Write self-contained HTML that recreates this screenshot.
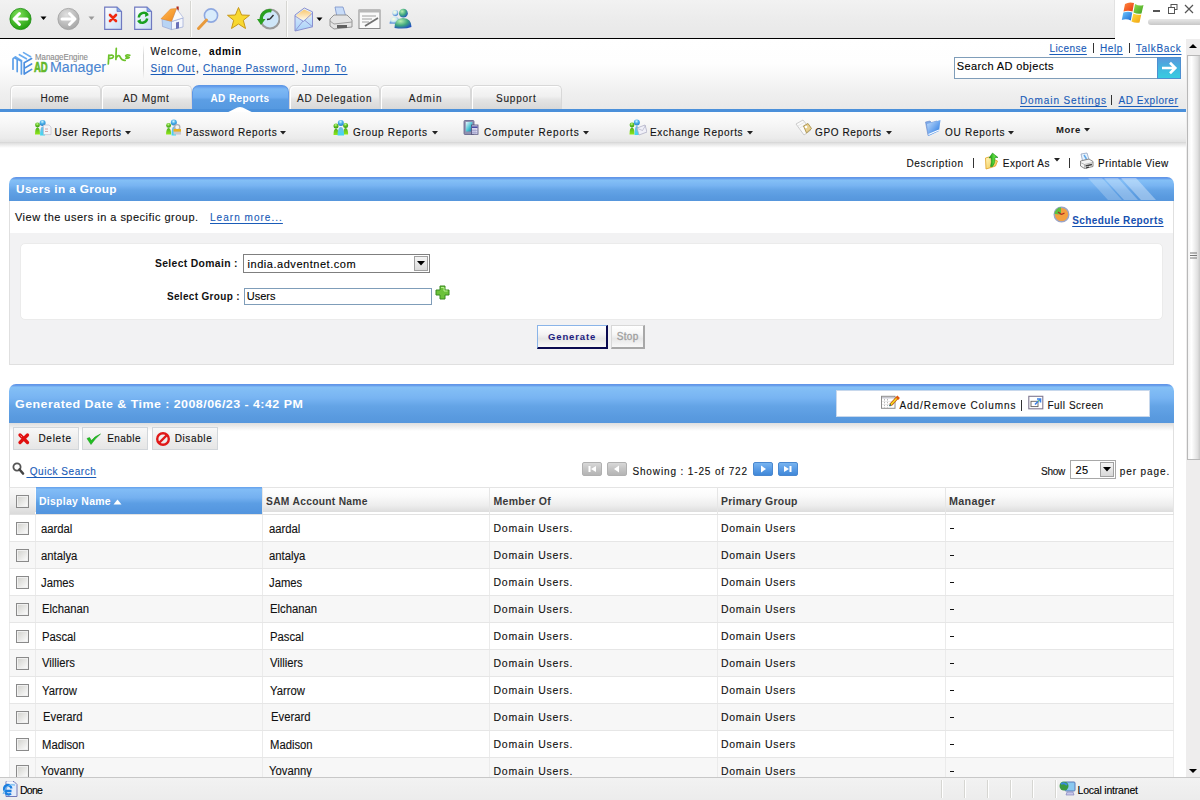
<!DOCTYPE html>
<html><head><meta charset="utf-8">
<style>
*{margin:0;padding:0;box-sizing:border-box}
html,body{width:1200px;height:800px;overflow:hidden;background:#fff;font-family:"Liberation Sans",sans-serif;font-size:12px;color:#222;position:relative}
.a{position:absolute}
.t{position:absolute;white-space:pre;line-height:1;-webkit-text-stroke:0.12px currentColor}
</style></head><body>
<div class=a style="left:0px;top:0px;width:1115px;height:38px;background:linear-gradient(#f2f2f2,#ececec 50%,#e8e8e8)"></div>
<div class=a style="left:0px;top:38px;width:1116px;height:1px;background:#000"></div>
<div class=a style="left:1114px;top:0px;width:1px;height:38px;background:#e2e2e2"></div>
<div class=a style="left:1115px;top:0px;width:85px;height:39px;background:#fff"></div>
<div class=a style="left:190px;top:1px;width:1px;height:36px;background:#d6d6d2"></div>
<div class=a style="left:191px;top:1px;width:1px;height:36px;background:#fbfbfa"></div>
<div class=a style="left:286px;top:1px;width:1px;height:36px;background:#d6d6d2"></div>
<div class=a style="left:287px;top:1px;width:1px;height:36px;background:#fbfbfa"></div>
<svg class=a style="left:9px;top:7px;" width="24" height="24" viewBox="0 0 24 24"><defs><radialGradient id="gb" cx="40%" cy="30%" r="70%"><stop offset="0" stop-color="#7fe05a"/><stop offset="1" stop-color="#23a010"/></radialGradient></defs><circle cx="11.5" cy="12" r="10.6" fill="url(#gb)" stroke="#1a8a10" stroke-width="0.8"/><path d="M5 12 L10.5 6.5 M5 12 L10.5 17.5 M5.5 12 H18" stroke="#fff" stroke-width="3" stroke-linecap="round" fill="none"/></svg>
<svg class=a style="left:40px;top:16px;" width="7" height="5" viewBox="0 0 7 5"><path d="M0.5 0.5 H6.5 L3.5 4 Z" fill="#000"/></svg>
<svg class=a style="left:57px;top:7px;" width="24" height="24" viewBox="0 0 24 24"><defs><radialGradient id="gf" cx="40%" cy="30%" r="70%"><stop offset="0" stop-color="#e0e0e0"/><stop offset="1" stop-color="#a8a8a8"/></radialGradient></defs><circle cx="11.5" cy="12" r="10.6" fill="url(#gf)" stroke="#a0a0a0" stroke-width="0.8"/><path d="M18 12 L12.5 6.5 M18 12 L12.5 17.5 M17.5 12 H5" stroke="#fff" stroke-width="3" stroke-linecap="round" fill="none"/></svg>
<svg class=a style="left:88px;top:16px;" width="7" height="5" viewBox="0 0 7 5"><path d="M0.5 0.5 H6.5 L3.5 4 Z" fill="#999"/></svg>
<svg class=a style="left:104px;top:6px;" width="20" height="25" viewBox="0 0 20 25"><defs><linearGradient id="dg104" x1="0" y1="0" x2="1" y2="1"><stop offset="0" stop-color="#fff"/><stop offset="1" stop-color="#c8dcf4"/></linearGradient></defs><path d="M0.7 1.2 H13 L17.5 5.5 V23.3 H0.7 Z" fill="url(#dg104)" stroke="#6f78c0" stroke-width="1.2"/><path d="M13 1.2 V5.5 H17.5" fill="#7aa8e8" stroke="#6f78c0" stroke-width="0.8"/><path d="M6 9 L12 15 M12 9 L6 15" stroke="#f02a10" stroke-width="2.6" stroke-linecap="round"/></svg>
<svg class=a style="left:134px;top:6px;" width="20" height="25" viewBox="0 0 20 25"><defs><linearGradient id="dg134" x1="0" y1="0" x2="1" y2="1"><stop offset="0" stop-color="#fff"/><stop offset="1" stop-color="#c8dcf4"/></linearGradient></defs><path d="M0.7 1.2 H13 L17.5 5.5 V23.3 H0.7 Z" fill="url(#dg134)" stroke="#6f78c0" stroke-width="1.2"/><path d="M13 1.2 V5.5 H17.5" fill="#7aa8e8" stroke="#6f78c0" stroke-width="0.8"/><path d="M13.5 8.5 A5 5 0 0 0 4.8 11.5" stroke="#1aa020" stroke-width="2.4" fill="none"/><path d="M11.5 6 L15 9 L11 11 Z" fill="#1aa020"/><path d="M4.5 15 A5 5 0 0 0 13.2 12.5" stroke="#1aa020" stroke-width="2.4" fill="none"/><path d="M6.5 18 L3 15 L7 13 Z" fill="#1aa020"/></svg>
<svg class=a style="left:160px;top:5px" width="25" height="27" viewBox="160 5 25 27"><defs><linearGradient id="rf" x1="0" y1="0" x2="1" y2="1"><stop offset="0" stop-color="#ffb850"/><stop offset="1" stop-color="#f08a20"/></linearGradient></defs><rect x="176.5" y="6.5" width="2.2" height="4" fill="#b02818"/><path d="M162 18.5 L171.5 21.5 V29.6 L162.5 26.5 Z" fill="#b8d4f4" stroke="#8a9ad0" stroke-width="0.6"/><path d="M171.5 21.5 L183 18 V27 L171.5 29.6 Z" fill="#f4f6fc" stroke="#8a9ad0" stroke-width="0.6"/><path d="M176.5 8.5 L183.3 17.8 L171.5 21.5 Z" fill="#fafafa" stroke="#9aa8d8" stroke-width="0.6"/><path d="M161 18.8 L170.5 9 L176.5 8.5 L171.5 21.3 Z" fill="url(#rf)" stroke="#e08020" stroke-width="0.5"/><path d="M176 22.5 L179 21.7 V28.2 L176 29 Z" fill="#6a70b8"/></svg>
<svg class=a style="left:196px;top:6px;" width="25" height="26" viewBox="0 0 25 26"><circle cx="15" cy="9.5" r="6.6" fill="#d8ecfc" stroke="#8ea8e0" stroke-width="1.6"/><path d="M10.5 14 L2.5 22.5" stroke="#e89a3c" stroke-width="3" stroke-linecap="round"/></svg>
<svg class=a style="left:226px;top:6px;" width="25" height="25" viewBox="0 0 25 25"><path d="M12.5 1.5 L15.6 9 L23.5 9.3 L17.3 14.3 L19.5 22.5 L12.5 18 L5.5 22.5 L7.7 14.3 L1.5 9.3 L9.4 9 Z" fill="#f8d830" stroke="#c89818" stroke-width="1"/></svg>
<svg class=a style="left:256px;top:7px;" width="24" height="24" viewBox="0 0 24 24"><circle cx="14" cy="12" r="9.5" fill="#cfe6f8" stroke="#9a9a9a" stroke-width="2"/><path d="M14 12 L17.5 8 M14 12 L11 12.5" stroke="#333" stroke-width="1.4"/><path d="M15.5 4 A8 8 0 0 0 5.5 13" stroke="#2aa020" stroke-width="3.2" fill="none"/><path d="M1 12 L9.5 12 L5 18 Z" fill="#2aa020"/></svg>
<svg class=a style="left:293px;top:6px" width="22" height="27" viewBox="293 6 22 27"><defs><linearGradient id="env" x1="0" y1="0" x2="0" y2="1"><stop offset="0" stop-color="#e8f4ff"/><stop offset="1" stop-color="#a8d0f8"/></linearGradient><linearGradient id="ltr" x1="0" y1="0" x2="0" y2="1"><stop offset="0" stop-color="#f8c870"/><stop offset="1" stop-color="#fff8e8"/></linearGradient></defs><path d="M295 15 L304.3 8 L312.5 11.8 V26.8 L295 31 Z" fill="url(#env)" stroke="#8a90d0" stroke-width="1"/><path d="M296.5 15 L304 9.5 L311 12.5 L311 17 L303 20 L296.5 18 Z" fill="url(#ltr)"/><path d="M295 16 L303.5 21.5 L312.5 13 M295 31 L303 21 M312.5 26.8 L305 20.5" stroke="#8a90d0" stroke-width="0.9" fill="none"/></svg>
<svg class=a style="left:316px;top:17px;" width="7" height="5" viewBox="0 0 7 5"><path d="M0.5 0.5 H6.5 L3.5 4 Z" fill="#000"/></svg>
<svg class=a style="left:329px;top:6px;" width="24" height="26" viewBox="0 0 24 26"><path d="M6 1 L14 1 L17 11 L8 11 Z" fill="#c8dcf8" stroke="#7890c8" stroke-width="0.8"/><path d="M1 13 L5 9 L18 9 L23 14 L23 21 L5 23 L1 20 Z" fill="#e4e4e4" stroke="#8a8a8a" stroke-width="0.9"/><path d="M1 15 L5 18 L23 16" stroke="#a0a0a0" fill="none"/><rect x="8" y="19" width="10" height="3" fill="#606060"/></svg>
<svg class=a style="left:358px;top:9px;" width="24" height="21" viewBox="0 0 24 21"><rect x="1" y="1" width="21" height="18.5" fill="#fafafa" stroke="#8a8a8a" stroke-width="1"/><rect x="1" y="1" width="21" height="2.5" fill="#b8b8b8"/><path d="M4 7 H18 M4 10 H14 M4 13 H11" stroke="#888" stroke-width="0.8"/><path d="M7 17 L20 9" stroke="#707070" stroke-width="1.8"/></svg>
<svg class=a style="left:386px;top:6px" width="28" height="26" viewBox="386 6 28 26"><defs><radialGradient id="mg" cx="35%" cy="30%" r="75%"><stop offset="0" stop-color="#b8f0b0"/><stop offset="0.55" stop-color="#40a880"/><stop offset="1" stop-color="#2050c0"/></radialGradient><radialGradient id="ms" cx="40%" cy="35%" r="70%"><stop offset="0" stop-color="#ffffe0"/><stop offset="0.5" stop-color="#c8e8f0"/><stop offset="1" stop-color="#3070d0"/></radialGradient></defs><path d="M389.5 23.5 Q390 16.5 394.5 16.5 Q399 16.5 399.5 22 L397 23.7 Z" fill="url(#ms)"/><circle cx="395.3" cy="13" r="2.9" fill="url(#ms)"/><path d="M394.5 28 Q394.5 18.5 403 18 Q411.5 18.5 411.5 27 Q405 29.5 394.5 28 Z" fill="url(#mg)"/><circle cx="403.4" cy="13.2" r="4.4" fill="url(#mg)"/></svg>
<svg class=a style="left:1120px;top:0px" width="26" height="26" viewBox="1120 0 26 26"><defs><linearGradient id="wr" x1="0" y1="0" x2="1" y2="1"><stop offset="0" stop-color="#ff8a40"/><stop offset="1" stop-color="#e83a10"/></linearGradient><linearGradient id="wgn" x1="0" y1="0" x2="1" y2="1"><stop offset="0" stop-color="#90e050"/><stop offset="1" stop-color="#40a020"/></linearGradient><linearGradient id="wb" x1="0" y1="0" x2="1" y2="1"><stop offset="0" stop-color="#70c8ff"/><stop offset="1" stop-color="#1a68d0"/></linearGradient><linearGradient id="wy" x1="0" y1="0" x2="1" y2="1"><stop offset="0" stop-color="#ffe040"/><stop offset="1" stop-color="#f0a010"/></linearGradient></defs><path d="M1125 4 Q1129 1.5 1134 3 L1132.5 11.5 Q1128 10 1123.5 11.5 Z" fill="url(#wr)"/><path d="M1135 4 Q1139.5 6.5 1143.5 5 L1141.5 13.5 Q1137.5 14.5 1133.5 12.5 Z" fill="url(#wgn)"/><path d="M1123.3 12.5 Q1128 11 1132.3 12.5 L1130.8 20.5 Q1126.5 18.5 1121.8 20 Z" fill="url(#wb)"/><path d="M1133.3 13.5 Q1137.5 15.5 1141.3 14.5 L1139.5 22.5 Q1135.5 23.5 1131.5 21.5 Z" fill="url(#wy)"/></svg>
<div class=a style="left:1153px;top:10px;width:7px;height:2px;background:#555"></div>
<svg class=a style="left:1168px;top:4px;" width="10" height="10" viewBox="0 0 10 10"><rect x="3" y="0.5" width="6" height="5" fill="none" stroke="#555" stroke-width="1"/><rect x="0.5" y="3.5" width="6" height="6" fill="#fff" stroke="#555" stroke-width="1"/></svg>
<svg class=a style="left:1184px;top:4px;" width="10" height="10" viewBox="0 0 10 10"><path d="M1 1 L9 9 M9 1 L1 9" stroke="#555" stroke-width="1.2"/></svg>
<div class=a style="left:1148px;top:19px;width:52px;height:6px;background:linear-gradient(#e8e8e8,#c8c8c8);border-radius:3px 0 0 3px"></div>
<div class=a style="left:0px;top:39px;width:1186px;height:70px;background:linear-gradient(#ffffff 0%,#fefefe 35%,#f0f0f0 75%,#e9e9e9 100%)"></div>
<svg class=a style="left:8px;top:46px" width="32" height="32" viewBox="0 0 800 800"><g fill="none" stroke-width="42" stroke-linecap="round" stroke-linejoin="round"><path d="M390 165 L565 268 M285 218 L460 320 M180 270 L340 365" stroke="#6aacf0"/><path d="M590 315 L405 420 V700 M405 560 L590 450 M405 700 L590 585" stroke="#4a8ee0"/><path d="M125 580 V330 Q125 290 175 300 L230 335 V640 M230 360 Q240 330 280 350 L335 385 V700" stroke="#5b9ee8"/></g></svg>
<svg class=a style="left:104px;top:46px" width="30" height="20" viewBox="104 46 30 20"><g fill="none" stroke="#6cc22a" stroke-width="1.7" stroke-linecap="round" stroke-linejoin="round"><path d="M108.8 55.2 L108.3 64 M108.9 55.6 Q113.6 54.3 113.4 56.8 Q112.9 58.8 109.4 58.4"/><path d="M116.3 48.3 Q116 54 115.9 59.5 M116 58.3 Q118.2 54.2 119.8 56.3 Q121.8 60.6 125.2 60.3"/><path d="M129.8 55.2 Q126.2 54.3 125.7 55.8 Q126.2 57 128.6 57 Q130.6 57.6 125.9 58.4"/></g></svg>
<div class=a style="left:143px;top:45px;width:1px;height:34px;background:linear-gradient(rgba(210,210,210,0),#d6d6d6 30%,#d6d6d6 70%,rgba(210,210,210,0))"></div>
<div class=a style="left:1093px;top:43px;width:1px;height:10px;background:#333"></div>
<div class=a style="left:1129px;top:43px;width:1px;height:10px;background:#333"></div>
<div class=a style="left:954px;top:57px;width:204px;height:22px;background:#fff;border:1px solid #7f9db9"></div>
<div class=a style="left:1157px;top:57px;width:24px;height:22px;background:linear-gradient(#5a98dc,#40b8e0 55%,#38cce0);border:1px solid #4d8fd0"></div>
<svg class=a style="left:1160px;top:60px;" width="18" height="16" viewBox="0 0 18 16"><path d="M2 8 H15 M10 2.8 L15.3 8 L10 13.2" stroke="#fff" stroke-width="2.6" fill="none"/></svg>
<div class=a style="left:10px;top:85px;width:91px;height:24px;background:linear-gradient(#f8f8f8,#f0f0f0 45%,#e4e4e4 60%,#d8d8d8 100%);border:1px solid #d8d8d8;border-bottom:none;border-radius:5px 5px 0 0;box-shadow:inset 1px 1px 0 #fff"></div>
<div class=a style="left:101px;top:85px;width:91px;height:24px;background:linear-gradient(#f8f8f8,#f0f0f0 45%,#e4e4e4 60%,#d8d8d8 100%);border:1px solid #d8d8d8;border-bottom:none;border-radius:5px 5px 0 0;box-shadow:inset 1px 1px 0 #fff"></div>
<div class=a style="left:289px;top:85px;width:91px;height:24px;background:linear-gradient(#f8f8f8,#f0f0f0 45%,#e4e4e4 60%,#d8d8d8 100%);border:1px solid #d8d8d8;border-bottom:none;border-radius:5px 5px 0 0;box-shadow:inset 1px 1px 0 #fff"></div>
<div class=a style="left:380px;top:85px;width:91px;height:24px;background:linear-gradient(#f8f8f8,#f0f0f0 45%,#e4e4e4 60%,#d8d8d8 100%);border:1px solid #d8d8d8;border-bottom:none;border-radius:5px 5px 0 0;box-shadow:inset 1px 1px 0 #fff"></div>
<div class=a style="left:471px;top:85px;width:91px;height:24px;background:linear-gradient(#f8f8f8,#f0f0f0 45%,#e4e4e4 60%,#d8d8d8 100%);border:1px solid #d8d8d8;border-bottom:none;border-radius:5px 5px 0 0;box-shadow:inset 1px 1px 0 #fff"></div>
<div class=a style="left:192px;top:85px;width:97px;height:26px;background:linear-gradient(#5f98ea 0,#6aa4ee 1px,#7db9f4 3px,#6fadf0 45%,#5c9ee4 55%,#5498e0 100%);border:1px solid #5e98e6;border-bottom:none;border-radius:7px 7px 0 0"></div>
<div class=a style="left:0px;top:109px;width:1186px;height:3px;background:#4b90da"></div>
<svg class=a style="left:228px;top:106px;" width="25" height="7" viewBox="0 0 25 7"><path d="M0.3 6 L9.3 1.4 Q12 0.4 14.7 1.4 L23.7 6 V7 H0.3 Z" fill="#fff"/></svg>
<div class=a style="left:1111px;top:95px;width:1px;height:10px;background:#333"></div>
<div class=a style="left:0px;top:112px;width:1186px;height:31px;background:linear-gradient(#fdfdfd,#f6f6f6 40%,#ebebeb 85%,#e0e0e0)"></div>
<div class=a style="left:0px;top:142px;width:1186px;height:6px;background:linear-gradient(#d8d8d8,rgba(255,255,255,0))"></div>
<svg width="0" height="0" style="position:absolute"><defs><radialGradient id="pg" cx="45%" cy="30%" r="70%"><stop offset="0" stop-color="#c8f890"/><stop offset="0.5" stop-color="#5cc020"/><stop offset="1" stop-color="#3a9a10"/></radialGradient><radialGradient id="pb" cx="45%" cy="30%" r="70%"><stop offset="0" stop-color="#d0f4ff"/><stop offset="0.5" stop-color="#48aee8"/><stop offset="1" stop-color="#2a80c8"/></radialGradient><linearGradient id="pbb" x1="0" y1="0" x2="0" y2="1"><stop offset="0" stop-color="#78b8e8"/><stop offset="1" stop-color="#40d8f0"/></linearGradient><linearGradient id="pgb" x1="0" y1="0" x2="0" y2="1"><stop offset="0" stop-color="#50b020"/><stop offset="1" stop-color="#90e818"/></linearGradient></defs></svg>
<svg class=a style="left:33px;top:118px" width="20" height="19" viewBox="33 118 20 19"><path d="M35.00 134.5 Q35.00 127.5 37.5 127.5 Q40.00 127.5 40.00 134.5 Z" fill="url(#pgb)"/><circle cx="37.5" cy="125" r="2.4" fill="url(#pg)"/><path d="M40.10 135.5 Q40.10 126.5 42.6 126.5 Q45.10 126.5 45.10 135.5 Z" fill="url(#pbb)"/><circle cx="42.6" cy="122.9" r="3" fill="url(#pb)"/><path d="M43.5 125 H49 L51 127 V134.6 H43.5 Z" fill="#f4f4f8" stroke="#b8b8c8" stroke-width="0.6"/><path d="M45 129 H48 M45 131.5 H48" stroke="#c89090" stroke-width="0.8"/></svg>
<svg class=a style="left:163px;top:118px" width="21" height="19" viewBox="163 118 21 19"><path d="M166.10 134.5 Q166.10 128 168.6 128 Q171.10 128 171.10 134.5 Z" fill="url(#pgb)"/><circle cx="168.6" cy="125.4" r="2.4" fill="url(#pg)"/><path d="M171.55 135.5 Q171.55 126.5 173.8 126.5 Q176.05 126.5 176.05 135.5 Z" fill="url(#pbb)"/><circle cx="173.8" cy="122.6" r="3" fill="url(#pb)"/><circle cx="177.2" cy="127.2" r="2.6" fill="none" stroke="#b0b0b8" stroke-width="1.4"/><rect x="173.5" y="129" width="7.5" height="5.6" fill="#c8c8d0"/><rect x="173.5" y="129" width="7.5" height="2.6" fill="#e8b020"/></svg>
<svg class=a style="left:125px;top:131px;" width="6" height="4" viewBox="0 0 6 4"><path d="M0 0 H6 L3 3.5 Z" fill="#222"/></svg>
<svg class=a style="left:280px;top:131px;" width="6" height="4" viewBox="0 0 6 4"><path d="M0 0 H6 L3 3.5 Z" fill="#222"/></svg>
<svg class=a style="left:331px;top:119px" width="20" height="18" viewBox="331 119 20 18"><path d="M333.50 135 Q333.50 128.5 336 128.5 Q338.50 128.5 338.50 135 Z" fill="url(#pgb)"/><circle cx="336" cy="126" r="2.5" fill="url(#pg)"/><path d="M343.10 134.5 Q343.10 128 345.6 128 Q348.10 128 348.10 134.5 Z" fill="url(#pgb)"/><circle cx="345.6" cy="125.4" r="2.5" fill="url(#pg)"/><path d="M337.55 135.5 Q337.55 127 340.8 127 Q344.05 127 344.05 135.5 Z" fill="url(#pbb)"/><circle cx="340.8" cy="123" r="3" fill="url(#pb)"/></svg>
<svg class=a style="left:432px;top:131px;" width="6" height="4" viewBox="0 0 6 4"><path d="M0 0 H6 L3 3.5 Z" fill="#222"/></svg>
<svg class=a style="left:462px;top:118px" width="18" height="18" viewBox="462 118 18 18"><defs><linearGradient id="scr" x1="0" y1="0" x2="1" y2="1"><stop offset="0" stop-color="#e8f8ff"/><stop offset="0.6" stop-color="#40c0d0"/><stop offset="1" stop-color="#3060a0"/></linearGradient></defs><rect x="464" y="120.5" width="10" height="14" rx="1" fill="#9090b0" stroke="#606088" stroke-width="0.8"/><rect x="465.8" y="122" width="6.5" height="9.5" fill="url(#scr)"/><rect x="471.5" y="125" width="6.5" height="9.3" fill="#d8d8f0" stroke="#505078" stroke-width="0.8"/><rect x="472" y="126.5" width="5.5" height="1.3" fill="#2a2a90"/><path d="M473 129 V134 M475 129 V134 M472 130.5 H477.5 M472 132.5 H477.5" stroke="#9090c0" stroke-width="0.5"/></svg>
<svg class=a style="left:583px;top:131px;" width="6" height="4" viewBox="0 0 6 4"><path d="M0 0 H6 L3 3.5 Z" fill="#222"/></svg>
<svg class=a style="left:627px;top:117px" width="20" height="19" viewBox="627 117 20 19"><path d="M629.50 134.5 Q629.50 127.5 632 127.5 Q634.50 127.5 634.50 134.5 Z" fill="url(#pgb)"/><circle cx="632" cy="125" r="2.4" fill="url(#pg)"/><path d="M634.55 135 Q634.55 126 636.8 126 Q639.05 126 639.05 135 Z" fill="url(#pbb)"/><circle cx="636.8" cy="122.5" r="3" fill="url(#pb)"/><path d="M637 128 L645 125 L647 132 L639 135 Z" fill="#f0f0f8" stroke="#a8a8c0" stroke-width="0.7"/><path d="M637.5 128.5 L642.5 130.5 L645.5 125.5" stroke="#a8a8c0" stroke-width="0.6" fill="none"/></svg>
<svg class=a style="left:747px;top:131px;" width="6" height="4" viewBox="0 0 6 4"><path d="M0 0 H6 L3 3.5 Z" fill="#222"/></svg>
<svg class=a style="left:793px;top:118px" width="20" height="19" viewBox="793 118 20 19"><path d="M796 124 L803 120 L811 130 L804 135 Z" fill="#fafafa" stroke="#c0c0c0" stroke-width="0.8"/><path d="M798 126 L804 122.5 M799.5 128 L805.5 124.5" stroke="#d8d8d8" stroke-width="0.6"/><path d="M803.5 126 L808 123.5 L811.5 128.5 L806.5 133 Z" fill="#e8d090" stroke="#a08840" stroke-width="0.8"/><circle cx="806" cy="127" r="1.3" fill="#fff"/></svg>
<svg class=a style="left:886px;top:131px;" width="6" height="4" viewBox="0 0 6 4"><path d="M0 0 H6 L3 3.5 Z" fill="#222"/></svg>
<svg class=a style="left:923px;top:118px" width="20" height="19" viewBox="923 118 20 19"><defs><linearGradient id="fld" x1="0" y1="0" x2="1" y2="1"><stop offset="0" stop-color="#c8e0fc"/><stop offset="1" stop-color="#1a70e0"/></linearGradient></defs><path d="M925.5 122 L930 121 L931.5 122.5 L937 121 L938 130 L928 135.5 Z" fill="#7aa8e8" stroke="#6a88c8" stroke-width="0.6"/><path d="M927 124 L940.5 120 L939 131 L928.5 136 Z" fill="url(#fld)"/><path d="M928.5 134.5 L939 130" stroke="#fff" stroke-width="1.2"/></svg>
<svg class=a style="left:1008px;top:131px;" width="6" height="4" viewBox="0 0 6 4"><path d="M0 0 H6 L3 3.5 Z" fill="#222"/></svg>
<svg class=a style="left:1084px;top:128px;" width="6" height="4" viewBox="0 0 6 4"><path d="M0 0 H6 L3 3.5 Z" fill="#222"/></svg>
<div class=a style="left:973px;top:158px;width:1px;height:10px;background:#333"></div>
<svg class=a style="left:983px;top:151px" width="17" height="20" viewBox="983 151 17 20"><defs><linearGradient id="fy" x1="0" y1="0" x2="1" y2="1"><stop offset="0" stop-color="#fff8c0"/><stop offset="1" stop-color="#f0c040"/></linearGradient><linearGradient id="ag" x1="0" y1="0" x2="1" y2="0"><stop offset="0" stop-color="#109010"/><stop offset="0.6" stop-color="#60e040"/><stop offset="1" stop-color="#109010"/></linearGradient></defs><path d="M985.5 158 L989 157 L997.5 161 L995.5 166 L991 167.5 L986 169 Z" fill="url(#fy)" stroke="#e0a020" stroke-width="0.8"/><path d="M990.5 166.5 Q992 162 991 157.5 L989 158 L992.5 153 L998 157.5 L995 157.5 Q995.5 163 992.5 166.5 Z" fill="url(#ag)" stroke="#108010" stroke-width="0.5"/></svg>
<svg class=a style="left:1054px;top:158px;" width="6" height="4" viewBox="0 0 6 4"><path d="M0 0 H6 L3 3.5 Z" fill="#222"/></svg>
<div class=a style="left:1069px;top:158px;width:1px;height:10px;background:#333"></div>
<svg class=a style="left:1078px;top:151px" width="18" height="20" viewBox="1078 151 18 20"><path d="M1081 154 L1087 153 L1089 159.5 L1082.5 160.5 Z" fill="#e8f4ff" stroke="#8898b8" stroke-width="0.7"/><path d="M1084 155 L1086.5 159" stroke="#60a8e8" stroke-width="1.5"/><path d="M1080.5 161 L1089 159 L1093 161.5 V166.5 L1084.5 168.5 L1080.5 166 Z" fill="#f4f4f4" stroke="#707070" stroke-width="0.8"/><path d="M1080.5 162.5 L1084.5 164.5 L1093 162.5 M1084.5 164.5 V168.5" stroke="#909090" stroke-width="0.6" fill="none"/><path d="M1085.5 166 L1092 164.5" stroke="#404040" stroke-width="1.3"/><path d="M1086 168 L1089 167" stroke="#303030" stroke-width="1.2"/></svg>
<div class=a style="left:9px;top:177px;width:1165px;height:24px;background:linear-gradient(#6196e8 0,#6196e8 1px,#6ea6ee 2px,#84c0f6 3px,#78b4f2 35%,#64a4e6 55%,#5a9be0 80%,#5696dc 100%);border-radius:7px 7px 0 0"></div>
<svg class=a style="left:1088px;top:178px;" width="70" height="22" viewBox="0 0 70 22"><path d="M0 0 H14 L34 22 H20 Z" fill="rgba(255,255,255,0.22)"/><path d="M16 0 H30 L50 22 H36 Z" fill="rgba(255,255,255,0.28)"/><path d="M33 0 H48 L68 22 H53 Z" fill="rgba(255,255,255,0.35)"/></svg>
<div class=a style="left:9px;top:201px;width:1165px;height:164px;background:#fff;border:1px solid #e0e0e0;border-top:none"></div>
<svg class=a style="left:1053px;top:206px;" width="17" height="17" viewBox="0 0 17 17"><circle cx="8.5" cy="8.5" r="7.3" fill="#f4a040" stroke="#9aa4c8" stroke-width="1.4"/><path d="M1.5 8 A7 7 0 0 1 8 1.3 L8 8.5 Z" fill="#5cc040"/><path d="M8.5 8.5 L5 6 M8.5 8.5 L11.5 7" stroke="#b02a20" stroke-width="1.2"/></svg>
<div class=a style="left:10px;top:233px;width:1163px;height:131px;background:#f2f2f3"></div>
<div class=a style="left:20px;top:243px;width:1143px;height:77px;background:#fff;border:1px solid #ebebeb;border-radius:5px"></div>
<div class=a style="left:243px;top:254px;width:187px;height:19px;background:#fff;border:1px solid #7f7f7f"></div>
<div class=a style="left:414px;top:256px;width:14px;height:15px;background:linear-gradient(#f4f4f4,#dcdcdc);border:1px solid #a0a0a0"></div>
<svg class=a style="left:417px;top:261px;" width="8" height="5" viewBox="0 0 8 5"><path d="M0 0 H8 L4 4.5 Z" fill="#000"/></svg>
<div class=a style="left:244px;top:288px;width:188px;height:17px;background:#fff;border:1px solid #7f9db9"></div>
<svg class=a style="left:435px;top:285px;" width="15" height="15" viewBox="0 0 15 15"><path d="M5 1 H10 V5 H14 V10 H10 V14 H5 V10 H1 V5 H5 Z" fill="#6cc23a" stroke="#3a8a20" stroke-width="1"/><path d="M6 2.5 H9 V6 H12.5" stroke="#b8f090" stroke-width="1" fill="none"/></svg>
<div class=a style="left:537px;top:325px;width:71px;height:24px;background:linear-gradient(#ffffff,#f4f4f4 40%,#e6e6e6 60%,#f8f8f8);border-style:solid;border-color:#8ab4e8 #0a0a50 #0a0a50 #8ab4e8;border-width:1px 2px 2px 1px"></div>
<div class=a style="left:611px;top:325px;width:34px;height:24px;background:linear-gradient(#ffffff,#f6f6f6 40%,#e8e8e8 60%,#f8f8f8);border-style:solid;border-color:#d8d8d8 #a8a8a8 #a8a8a8 #d8d8d8;border-width:1px 2px 2px 1px"></div>
<div class=a style="left:9px;top:384px;width:1165px;height:40px;background:linear-gradient(#6196e8 0,#6196e8 1px,#6ea6ee 2px,#84c0f6 3px,#78b4f2 35%,#64a4e6 55%,#5a9be0 80%,#5696dc 100%);border-radius:7px 7px 0 0"></div>
<div class=a style="left:836px;top:390px;width:314px;height:27px;background:#fff;border:1px solid #c8d8ec"></div>
<svg class=a style="left:880px;top:394px" width="20" height="16" viewBox="880 394 20 16"><rect x="881.5" y="396.3" width="13.5" height="12" fill="#fff" stroke="#8c8c8c" stroke-width="1"/><rect x="882" y="397" width="12.5" height="1.5" fill="#c8c8d0"/><path d="M884.5 399 V408 M887.5 399 V408" stroke="#b0b0b0" stroke-width="0.9" stroke-dasharray="1.5 1.3"/><path d="M882 401.5 H894.5 M882 404.5 H894.5" stroke="#e4e4e4" stroke-width="0.8"/><path d="M890.5 405 L897.5 397.5" stroke="#c05010" stroke-width="3.2"/><path d="M890.5 405 L897.5 397.5" stroke="#f8e020" stroke-width="1.6"/><path d="M896.5 396.5 L899 399" stroke="#e05a10" stroke-width="2.5"/><path d="M889.5 406 L890.8 404.6" stroke="#206060" stroke-width="1.4"/></svg>
<div class=a style="left:1021px;top:400px;width:1px;height:11px;background:#333"></div>
<svg class=a style="left:1027px;top:394px" width="18" height="17" viewBox="1027 394 18 17"><rect x="1028.8" y="396.3" width="14" height="12.5" fill="#fff" stroke="#807890" stroke-width="1.1"/><rect x="1031" y="401.3" width="7" height="5.3" fill="none" stroke="#606060" stroke-width="0.9"/><path d="M1035 404.5 L1040 399.5" stroke="#3a80e8" stroke-width="1.6"/><path d="M1037 399 H1040.5 V402.5" stroke="#3a80e8" stroke-width="1.6" fill="none"/><circle cx="1038.5" cy="401" r="0.7" fill="#80e060"/></svg>
<div class=a style="left:9px;top:423px;width:1165px;height:360px;background:#fff;border:1px solid #e0e0e0;border-top:none"></div>
<div class=a style="left:10px;top:423px;width:1163px;height:8px;background:linear-gradient(#dedede,rgba(255,255,255,0))"></div>
<div class=a style="left:13px;top:427px;width:66px;height:23px;background:linear-gradient(#f8f8f8,#eeeeee 50%,#e6e6e6);border:1px solid #d2d6da"></div>
<div class=a style="left:82px;top:427px;width:66px;height:23px;background:linear-gradient(#f8f8f8,#eeeeee 50%,#e6e6e6);border:1px solid #d2d6da"></div>
<div class=a style="left:152px;top:427px;width:66px;height:23px;background:linear-gradient(#f8f8f8,#eeeeee 50%,#e6e6e6);border:1px solid #d2d6da"></div>
<svg class=a style="left:17px;top:432px" width="14" height="14" viewBox="17 432 14 14"><path d="M20 435 L27.5 442.5 M27.5 435 L20 442.5" stroke="#e01010" stroke-width="3.3" stroke-linecap="round"/><path d="M20.5 435.5 L22 437" stroke="#ff8080" stroke-width="1"/></svg>
<svg class=a style="left:86px;top:433px" width="16" height="13" viewBox="86 433 16 13"><path d="M87 438.5 L89.5 437.5 L91.5 440.5 Q95 436 100.5 434 Q95.5 438 91 444.5 Z" fill="#20c020" stroke="#109010" stroke-width="0.5"/></svg>
<svg class=a style="left:156px;top:432px;" width="14" height="14" viewBox="0 0 14 14"><circle cx="7" cy="7" r="5.8" fill="none" stroke="#e01818" stroke-width="2.4"/><path d="M3 11 L11 3" stroke="#e01818" stroke-width="2.4"/></svg>
<svg class=a style="left:12px;top:462px;" width="13" height="14" viewBox="0 0 13 14"><circle cx="5" cy="5" r="3.6" fill="#fff" stroke="#555" stroke-width="1.8"/><path d="M7.5 7.5 L11 11.5" stroke="#444" stroke-width="2.6" stroke-linecap="round"/></svg>
<div class=a style="left:581.6px;top:462px;width:20px;height:14px;background:linear-gradient(#d8d8d8,#c4c4c4 50%,#b4b4b4);border:1px solid #b0b0b0;border-radius:2px"></div>
<svg class=a style="left:581.6px;top:462px;" width="20" height="14" viewBox="0 0 20 14"><rect x="6.5" y="4" width="2" height="6" fill="#fff"/><path d="M14 4 V10 L9 7 Z" fill="#fff"/></svg>
<div class=a style="left:607px;top:462px;width:20px;height:14px;background:linear-gradient(#d8d8d8,#c4c4c4 50%,#b4b4b4);border:1px solid #b0b0b0;border-radius:2px"></div>
<svg class=a style="left:607px;top:462px;" width="20" height="14" viewBox="0 0 20 14"><path d="M12 3.5 V10.5 L7 7 Z" fill="#fff"/></svg>
<div class=a style="left:753px;top:462px;width:20px;height:14px;background:linear-gradient(#78b4f0,#5a9ce6 50%,#4088d8);border:1px solid #4a88d0;border-radius:2px"></div>
<svg class=a style="left:753px;top:462px;" width="20" height="14" viewBox="0 0 20 14"><path d="M8 3.5 V10.5 L13 7 Z" fill="#fff"/></svg>
<div class=a style="left:778.4px;top:462px;width:20px;height:14px;background:linear-gradient(#78b4f0,#5a9ce6 50%,#4088d8);border:1px solid #4a88d0;border-radius:2px"></div>
<svg class=a style="left:778.4px;top:462px;" width="20" height="14" viewBox="0 0 20 14"><path d="M6 4 V10 L11 7 Z" fill="#fff"/><rect x="11.5" y="4" width="2" height="6" fill="#fff"/></svg>
<div class=a style="left:1070px;top:460px;width:46px;height:19px;background:#fff;border:1px solid #a8a8a8"></div>
<div class=a style="left:1100px;top:462px;width:14px;height:15px;background:linear-gradient(#f4f4f4,#d8d8d8);border:1px solid #a0a0a0"></div>
<svg class=a style="left:1103px;top:467px;" width="8" height="5" viewBox="0 0 8 5"><path d="M0 0 H8 L4 4.5 Z" fill="#000"/></svg>
<div class=a style="left:9px;top:487px;width:1165px;height:1px;background:#e4e4e4"></div>
<div class=a style="left:9px;top:488px;width:1165px;height:24px;background:linear-gradient(#ffffff,#fafafa 35%,#ececec 75%,#dddddd)"></div>
<div class=a style="left:9px;top:512px;width:1165px;height:2px;background:#fff"></div>
<div class=a style="left:9px;top:488px;width:26px;height:26px;background:linear-gradient(#fafafa,#ececec 60%,#dadada)"></div>
<div class=a style="left:36px;top:487px;width:226px;height:27px;background:linear-gradient(#6aa6ee 0,#6aa6ee 1px,#82bdf6 2px,#74b0f0 40%,#5c9ee4 60%,#5294de)"></div>
<div class=a style="left:262px;top:487px;width:1px;height:27px;background:#e6e6e6"></div>
<div class=a style="left:489px;top:487px;width:1px;height:27px;background:#e6e6e6"></div>
<div class=a style="left:717px;top:487px;width:1px;height:27px;background:#e6e6e6"></div>
<div class=a style="left:945px;top:487px;width:1px;height:27px;background:#e6e6e6"></div>
<div class=a style="left:1173px;top:487px;width:1px;height:27px;background:#e6e6e6"></div>
<div class=a style="left:9px;top:487px;width:1px;height:27px;background:#e6e6e6"></div>
<div class=a style="left:9px;top:514px;width:1165px;height:1px;background:#e2e2e2"></div>
<svg class=a style="left:16px;top:495px;" width="14" height="14" viewBox="0 0 14 14"><rect x="0.5" y="0.5" width="12" height="12" fill="#f0f0f0" stroke="#8a8a8a" stroke-width="1"/><rect x="2" y="2" width="9" height="9" fill="url(#cbg)"/></svg>
<svg class=a style="left:113px;top:499px;" width="9" height="6" viewBox="0 0 9 6"><path d="M0.5 5.5 H8.5 L4.5 0.5 Z" fill="#fff"/></svg>
<div class=a style="left:9px;top:515px;width:1165px;height:26px;background:#ffffff"></div>
<div class=a style="left:9px;top:541px;width:1165px;height:1px;background:#e6e6e6"></div>
<div class=a style="left:9px;top:515px;width:1px;height:26px;background:#ebebeb"></div>
<div class=a style="left:35px;top:515px;width:1px;height:26px;background:#ebebeb"></div>
<div class=a style="left:262px;top:515px;width:1px;height:26px;background:#ebebeb"></div>
<div class=a style="left:489px;top:515px;width:1px;height:26px;background:#ebebeb"></div>
<div class=a style="left:717px;top:515px;width:1px;height:26px;background:#ebebeb"></div>
<div class=a style="left:945px;top:515px;width:1px;height:26px;background:#ebebeb"></div>
<div class=a style="left:1173px;top:515px;width:1px;height:26px;background:#ebebeb"></div>
<svg class=a style="left:16px;top:522px;" width="14" height="14" viewBox="0 0 14 14"><rect x="0.5" y="0.5" width="12" height="12" fill="#f0f0f0" stroke="#8a8a8a" stroke-width="1"/><rect x="2" y="2" width="9" height="9" fill="url(#cbg)"/></svg>
<div class=a style="left:950px;top:528px;width:4px;height:1px;background:#111"></div>
<div class=a style="left:9px;top:542px;width:1165px;height:26px;background:#f7f7f7"></div>
<div class=a style="left:9px;top:568px;width:1165px;height:1px;background:#e6e6e6"></div>
<div class=a style="left:9px;top:542px;width:1px;height:26px;background:#ebebeb"></div>
<div class=a style="left:35px;top:542px;width:1px;height:26px;background:#ebebeb"></div>
<div class=a style="left:262px;top:542px;width:1px;height:26px;background:#ebebeb"></div>
<div class=a style="left:489px;top:542px;width:1px;height:26px;background:#ebebeb"></div>
<div class=a style="left:717px;top:542px;width:1px;height:26px;background:#ebebeb"></div>
<div class=a style="left:945px;top:542px;width:1px;height:26px;background:#ebebeb"></div>
<div class=a style="left:1173px;top:542px;width:1px;height:26px;background:#ebebeb"></div>
<svg class=a style="left:16px;top:549px;" width="14" height="14" viewBox="0 0 14 14"><rect x="0.5" y="0.5" width="12" height="12" fill="#f0f0f0" stroke="#8a8a8a" stroke-width="1"/><rect x="2" y="2" width="9" height="9" fill="url(#cbg)"/></svg>
<div class=a style="left:950px;top:555px;width:4px;height:1px;background:#111"></div>
<div class=a style="left:9px;top:569px;width:1165px;height:26px;background:#ffffff"></div>
<div class=a style="left:9px;top:595px;width:1165px;height:1px;background:#e6e6e6"></div>
<div class=a style="left:9px;top:569px;width:1px;height:26px;background:#ebebeb"></div>
<div class=a style="left:35px;top:569px;width:1px;height:26px;background:#ebebeb"></div>
<div class=a style="left:262px;top:569px;width:1px;height:26px;background:#ebebeb"></div>
<div class=a style="left:489px;top:569px;width:1px;height:26px;background:#ebebeb"></div>
<div class=a style="left:717px;top:569px;width:1px;height:26px;background:#ebebeb"></div>
<div class=a style="left:945px;top:569px;width:1px;height:26px;background:#ebebeb"></div>
<div class=a style="left:1173px;top:569px;width:1px;height:26px;background:#ebebeb"></div>
<svg class=a style="left:16px;top:576px;" width="14" height="14" viewBox="0 0 14 14"><rect x="0.5" y="0.5" width="12" height="12" fill="#f0f0f0" stroke="#8a8a8a" stroke-width="1"/><rect x="2" y="2" width="9" height="9" fill="url(#cbg)"/></svg>
<div class=a style="left:950px;top:582px;width:4px;height:1px;background:#111"></div>
<div class=a style="left:9px;top:596px;width:1165px;height:26px;background:#f7f7f7"></div>
<div class=a style="left:9px;top:622px;width:1165px;height:1px;background:#e6e6e6"></div>
<div class=a style="left:9px;top:596px;width:1px;height:26px;background:#ebebeb"></div>
<div class=a style="left:35px;top:596px;width:1px;height:26px;background:#ebebeb"></div>
<div class=a style="left:262px;top:596px;width:1px;height:26px;background:#ebebeb"></div>
<div class=a style="left:489px;top:596px;width:1px;height:26px;background:#ebebeb"></div>
<div class=a style="left:717px;top:596px;width:1px;height:26px;background:#ebebeb"></div>
<div class=a style="left:945px;top:596px;width:1px;height:26px;background:#ebebeb"></div>
<div class=a style="left:1173px;top:596px;width:1px;height:26px;background:#ebebeb"></div>
<svg class=a style="left:16px;top:603px;" width="14" height="14" viewBox="0 0 14 14"><rect x="0.5" y="0.5" width="12" height="12" fill="#f0f0f0" stroke="#8a8a8a" stroke-width="1"/><rect x="2" y="2" width="9" height="9" fill="url(#cbg)"/></svg>
<div class=a style="left:950px;top:609px;width:4px;height:1px;background:#111"></div>
<div class=a style="left:9px;top:623px;width:1165px;height:26px;background:#ffffff"></div>
<div class=a style="left:9px;top:649px;width:1165px;height:1px;background:#e6e6e6"></div>
<div class=a style="left:9px;top:623px;width:1px;height:26px;background:#ebebeb"></div>
<div class=a style="left:35px;top:623px;width:1px;height:26px;background:#ebebeb"></div>
<div class=a style="left:262px;top:623px;width:1px;height:26px;background:#ebebeb"></div>
<div class=a style="left:489px;top:623px;width:1px;height:26px;background:#ebebeb"></div>
<div class=a style="left:717px;top:623px;width:1px;height:26px;background:#ebebeb"></div>
<div class=a style="left:945px;top:623px;width:1px;height:26px;background:#ebebeb"></div>
<div class=a style="left:1173px;top:623px;width:1px;height:26px;background:#ebebeb"></div>
<svg class=a style="left:16px;top:630px;" width="14" height="14" viewBox="0 0 14 14"><rect x="0.5" y="0.5" width="12" height="12" fill="#f0f0f0" stroke="#8a8a8a" stroke-width="1"/><rect x="2" y="2" width="9" height="9" fill="url(#cbg)"/></svg>
<div class=a style="left:950px;top:636px;width:4px;height:1px;background:#111"></div>
<div class=a style="left:9px;top:650px;width:1165px;height:26px;background:#f7f7f7"></div>
<div class=a style="left:9px;top:676px;width:1165px;height:1px;background:#e6e6e6"></div>
<div class=a style="left:9px;top:650px;width:1px;height:26px;background:#ebebeb"></div>
<div class=a style="left:35px;top:650px;width:1px;height:26px;background:#ebebeb"></div>
<div class=a style="left:262px;top:650px;width:1px;height:26px;background:#ebebeb"></div>
<div class=a style="left:489px;top:650px;width:1px;height:26px;background:#ebebeb"></div>
<div class=a style="left:717px;top:650px;width:1px;height:26px;background:#ebebeb"></div>
<div class=a style="left:945px;top:650px;width:1px;height:26px;background:#ebebeb"></div>
<div class=a style="left:1173px;top:650px;width:1px;height:26px;background:#ebebeb"></div>
<svg class=a style="left:16px;top:657px;" width="14" height="14" viewBox="0 0 14 14"><rect x="0.5" y="0.5" width="12" height="12" fill="#f0f0f0" stroke="#8a8a8a" stroke-width="1"/><rect x="2" y="2" width="9" height="9" fill="url(#cbg)"/></svg>
<div class=a style="left:950px;top:663px;width:4px;height:1px;background:#111"></div>
<div class=a style="left:9px;top:677px;width:1165px;height:26px;background:#ffffff"></div>
<div class=a style="left:9px;top:703px;width:1165px;height:1px;background:#e6e6e6"></div>
<div class=a style="left:9px;top:677px;width:1px;height:26px;background:#ebebeb"></div>
<div class=a style="left:35px;top:677px;width:1px;height:26px;background:#ebebeb"></div>
<div class=a style="left:262px;top:677px;width:1px;height:26px;background:#ebebeb"></div>
<div class=a style="left:489px;top:677px;width:1px;height:26px;background:#ebebeb"></div>
<div class=a style="left:717px;top:677px;width:1px;height:26px;background:#ebebeb"></div>
<div class=a style="left:945px;top:677px;width:1px;height:26px;background:#ebebeb"></div>
<div class=a style="left:1173px;top:677px;width:1px;height:26px;background:#ebebeb"></div>
<svg class=a style="left:16px;top:684px;" width="14" height="14" viewBox="0 0 14 14"><rect x="0.5" y="0.5" width="12" height="12" fill="#f0f0f0" stroke="#8a8a8a" stroke-width="1"/><rect x="2" y="2" width="9" height="9" fill="url(#cbg)"/></svg>
<div class=a style="left:950px;top:690px;width:4px;height:1px;background:#111"></div>
<div class=a style="left:9px;top:704px;width:1165px;height:26px;background:#f7f7f7"></div>
<div class=a style="left:9px;top:730px;width:1165px;height:1px;background:#e6e6e6"></div>
<div class=a style="left:9px;top:704px;width:1px;height:26px;background:#ebebeb"></div>
<div class=a style="left:35px;top:704px;width:1px;height:26px;background:#ebebeb"></div>
<div class=a style="left:262px;top:704px;width:1px;height:26px;background:#ebebeb"></div>
<div class=a style="left:489px;top:704px;width:1px;height:26px;background:#ebebeb"></div>
<div class=a style="left:717px;top:704px;width:1px;height:26px;background:#ebebeb"></div>
<div class=a style="left:945px;top:704px;width:1px;height:26px;background:#ebebeb"></div>
<div class=a style="left:1173px;top:704px;width:1px;height:26px;background:#ebebeb"></div>
<svg class=a style="left:16px;top:711px;" width="14" height="14" viewBox="0 0 14 14"><rect x="0.5" y="0.5" width="12" height="12" fill="#f0f0f0" stroke="#8a8a8a" stroke-width="1"/><rect x="2" y="2" width="9" height="9" fill="url(#cbg)"/></svg>
<div class=a style="left:950px;top:717px;width:4px;height:1px;background:#111"></div>
<div class=a style="left:9px;top:731px;width:1165px;height:26px;background:#ffffff"></div>
<div class=a style="left:9px;top:757px;width:1165px;height:1px;background:#e6e6e6"></div>
<div class=a style="left:9px;top:731px;width:1px;height:26px;background:#ebebeb"></div>
<div class=a style="left:35px;top:731px;width:1px;height:26px;background:#ebebeb"></div>
<div class=a style="left:262px;top:731px;width:1px;height:26px;background:#ebebeb"></div>
<div class=a style="left:489px;top:731px;width:1px;height:26px;background:#ebebeb"></div>
<div class=a style="left:717px;top:731px;width:1px;height:26px;background:#ebebeb"></div>
<div class=a style="left:945px;top:731px;width:1px;height:26px;background:#ebebeb"></div>
<div class=a style="left:1173px;top:731px;width:1px;height:26px;background:#ebebeb"></div>
<svg class=a style="left:16px;top:738px;" width="14" height="14" viewBox="0 0 14 14"><rect x="0.5" y="0.5" width="12" height="12" fill="#f0f0f0" stroke="#8a8a8a" stroke-width="1"/><rect x="2" y="2" width="9" height="9" fill="url(#cbg)"/></svg>
<div class=a style="left:950px;top:744px;width:4px;height:1px;background:#111"></div>
<div class=a style="left:9px;top:758px;width:1165px;height:26px;background:#f7f7f7"></div>
<div class=a style="left:9px;top:784px;width:1165px;height:1px;background:#e6e6e6"></div>
<div class=a style="left:9px;top:758px;width:1px;height:26px;background:#ebebeb"></div>
<div class=a style="left:35px;top:758px;width:1px;height:26px;background:#ebebeb"></div>
<div class=a style="left:262px;top:758px;width:1px;height:26px;background:#ebebeb"></div>
<div class=a style="left:489px;top:758px;width:1px;height:26px;background:#ebebeb"></div>
<div class=a style="left:717px;top:758px;width:1px;height:26px;background:#ebebeb"></div>
<div class=a style="left:945px;top:758px;width:1px;height:26px;background:#ebebeb"></div>
<div class=a style="left:1173px;top:758px;width:1px;height:26px;background:#ebebeb"></div>
<svg class=a style="left:16px;top:765px;" width="14" height="14" viewBox="0 0 14 14"><rect x="0.5" y="0.5" width="12" height="12" fill="#f0f0f0" stroke="#8a8a8a" stroke-width="1"/><rect x="2" y="2" width="9" height="9" fill="url(#cbg)"/></svg>
<div class=a style="left:950px;top:771px;width:4px;height:1px;background:#111"></div>
<svg width="0" height="0" style="position:absolute"><defs><linearGradient id="cbg" x1="0" y1="0" x2="1" y2="1"><stop offset="0" stop-color="#d4d4d0"/><stop offset="1" stop-color="#fafafa"/></linearGradient></defs></svg>
<div class=t style="left:35.20px;top:53px;font-size:9px;color:#8c8c8c;transform:scaleX(0.875);transform-origin:0 0;">ManageEngine</div>
<div class=t style="left:34.30px;top:59px;font-size:15.5px;color:#62b82a;font-weight:bold;-webkit-text-stroke:0;transform:scaleX(0.613);transform-origin:0 0;-webkit-text-stroke:0.7px #62b82a;">AD</div>
<div class=t style="left:50.08px;top:59px;font-size:15.5px;color:#4a86d2;transform:scaleX(0.916);transform-origin:0 0;">Manager</div>
<div class=t style="left:150.60px;top:47px;font-size:10px;color:#111;letter-spacing:0.86px;">Welcome,</div>
<div class=t style="left:209.00px;top:47px;font-size:10px;color:#000;font-weight:bold;-webkit-text-stroke:0;letter-spacing:0.67px;">admin</div>
<div class=t style="left:150.60px;top:64px;font-size:10px;color:#1a5cb8;letter-spacing:0.70px;text-decoration:underline;text-underline-offset:2px;text-decoration-thickness:1px;">Sign Out</div>
<div class=t style="left:196.00px;top:64px;font-size:10px;color:#222;">,</div>
<div class=t style="left:203.00px;top:64px;font-size:10px;color:#1a5cb8;letter-spacing:0.67px;text-decoration:underline;text-underline-offset:2px;text-decoration-thickness:1px;">Change Password</div>
<div class=t style="left:295.50px;top:64px;font-size:10px;color:#222;">,</div>
<div class=t style="left:302.00px;top:64px;font-size:10px;color:#1a5cb8;letter-spacing:1.13px;text-decoration:underline;text-underline-offset:2px;text-decoration-thickness:1px;">Jump To</div>
<div class=t style="left:1049.40px;top:44px;font-size:10px;color:#1a5cb8;letter-spacing:0.43px;text-decoration:underline;text-underline-offset:2px;text-decoration-thickness:1px;">License</div>
<div class=t style="left:1100.00px;top:44px;font-size:10px;color:#1a5cb8;letter-spacing:0.57px;text-decoration:underline;text-underline-offset:2px;text-decoration-thickness:1px;">Help</div>
<div class=t style="left:1135.80px;top:44px;font-size:10px;color:#1a5cb8;letter-spacing:0.71px;text-decoration:underline;text-underline-offset:2px;text-decoration-thickness:1px;">TalkBack</div>
<div class=t style="left:956.70px;top:61px;font-size:11px;color:#000;letter-spacing:0.40px;">Search AD objects</div>
<div class=t style="left:40.50px;top:94px;font-size:10px;color:#222;letter-spacing:0.46px;">Home</div>
<div class=t style="left:123.00px;top:94px;font-size:10px;color:#222;letter-spacing:0.68px;">AD Mgmt</div>
<div class=t style="left:297.00px;top:94px;font-size:10px;color:#222;letter-spacing:0.84px;">AD Delegation</div>
<div class=t style="left:408.75px;top:94px;font-size:10px;color:#222;letter-spacing:1.12px;">Admin</div>
<div class=t style="left:496.00px;top:94px;font-size:10px;color:#222;letter-spacing:0.79px;">Support</div>
<div class=t style="left:210.50px;top:94px;font-size:10px;color:#fff;font-weight:bold;-webkit-text-stroke:0;letter-spacing:0.40px;">AD Reports</div>
<div class=t style="left:1020.00px;top:96px;font-size:10px;color:#1a5cb8;letter-spacing:0.90px;text-decoration:underline;text-underline-offset:2px;text-decoration-thickness:1px;">Domain Settings</div>
<div class=t style="left:1118.50px;top:96px;font-size:10px;color:#1a5cb8;letter-spacing:0.54px;text-decoration:underline;text-underline-offset:2px;text-decoration-thickness:1px;">AD Explorer</div>
<div class=t style="left:54.50px;top:128px;font-size:10px;color:#111;letter-spacing:0.69px;">User Reports</div>
<div class=t style="left:185.75px;top:128px;font-size:10px;color:#111;letter-spacing:0.62px;">Password Reports</div>
<div class=t style="left:353.00px;top:128px;font-size:10px;color:#111;letter-spacing:0.70px;">Group Reports</div>
<div class=t style="left:484.00px;top:128px;font-size:10px;color:#111;letter-spacing:0.87px;">Computer Reports</div>
<div class=t style="left:650.00px;top:128px;font-size:10px;color:#111;letter-spacing:0.69px;">Exchange Reports</div>
<div class=t style="left:815.00px;top:128px;font-size:10px;color:#111;letter-spacing:0.60px;">GPO Reports</div>
<div class=t style="left:945.00px;top:128px;font-size:10px;color:#111;letter-spacing:0.75px;">OU Reports</div>
<div class=t style="left:1056.00px;top:125px;font-size:9.5px;color:#1a1a1a;font-weight:bold;-webkit-text-stroke:0;letter-spacing:0.53px;">More</div>
<div class=t style="left:906.50px;top:159px;font-size:10px;color:#111;letter-spacing:0.65px;">Description</div>
<div class=t style="left:1002.75px;top:159px;font-size:10px;color:#111;letter-spacing:0.49px;">Export As</div>
<div class=t style="left:1098.00px;top:159px;font-size:10px;color:#111;letter-spacing:0.50px;">Printable View</div>
<div class=t style="left:16.00px;top:184px;font-size:11.5px;color:#fff;font-weight:bold;-webkit-text-stroke:0;letter-spacing:0.35px;transform:scaleX(1.027);transform-origin:0 0;">Users in a Group</div>
<div class=t style="left:15.00px;top:212px;font-size:11px;color:#111;letter-spacing:0.48px;">View the users in a specific group.</div>
<div class=t style="left:210.00px;top:213px;font-size:10px;color:#1a5cb8;letter-spacing:1.03px;text-decoration:underline;text-underline-offset:2px;text-decoration-thickness:1px;">Learn more...</div>
<div class=t style="left:1072.20px;top:216px;font-size:10px;color:#1550b0;font-weight:bold;-webkit-text-stroke:0;letter-spacing:0.40px;text-decoration:underline;text-underline-offset:2px;text-decoration-thickness:1px;">Schedule Reports</div>
<div class=t style="left:155.20px;top:258px;font-size:10.5px;color:#111;font-weight:bold;-webkit-text-stroke:0;letter-spacing:0.35px;transform:scaleX(0.986);transform-origin:0 0;">Select Domain :</div>
<div class=t style="left:247.50px;top:259px;font-size:11px;color:#000;letter-spacing:0.54px;">india.adventnet.com</div>
<div class=t style="left:166.70px;top:291px;font-size:10.5px;color:#111;font-weight:bold;-webkit-text-stroke:0;letter-spacing:0.35px;transform:scaleX(0.950);transform-origin:0 0;">Select Group :</div>
<div class=t style="left:246.70px;top:291px;font-size:11px;color:#000;letter-spacing:0.02px;">Users</div>
<div class=t style="left:548.00px;top:332px;font-size:9.5px;color:#1c1c80;font-weight:bold;-webkit-text-stroke:0;letter-spacing:0.87px;">Generate</div>
<div class=t style="left:616.70px;top:332px;font-size:10px;color:#a0a0a0;letter-spacing:0.33px;-webkit-text-stroke:0.3px #a0a0a0;">Stop</div>
<div class=t style="left:15.30px;top:399px;font-size:11px;color:#fff;font-weight:bold;-webkit-text-stroke:0;letter-spacing:0.40px;transform:scaleX(1.132);transform-origin:0 0;">Generated Date &amp; Time : 2008/06/23 - 4:42 PM</div>
<div class=t style="left:899.50px;top:401px;font-size:10px;color:#111;letter-spacing:0.94px;">Add/Remove Columns</div>
<div class=t style="left:1047.40px;top:401px;font-size:10px;color:#111;letter-spacing:0.52px;">Full Screen</div>
<div class=t style="left:38.40px;top:434px;font-size:10px;color:#111;letter-spacing:0.73px;">Delete</div>
<div class=t style="left:107.20px;top:434px;font-size:10px;color:#111;letter-spacing:0.44px;">Enable</div>
<div class=t style="left:174.70px;top:434px;font-size:10px;color:#111;letter-spacing:0.62px;">Disable</div>
<div class=t style="left:26.47px;top:467px;font-size:10px;color:#1a5cb8;letter-spacing:0.54px;text-decoration:underline;text-underline-offset:2px;text-decoration-thickness:1px;"> Quick Search</div>
<div class=t style="left:632.40px;top:467px;font-size:10px;color:#111;letter-spacing:0.87px;">Showing : 1-25 of 722</div>
<div class=t style="left:1041.00px;top:467px;font-size:10px;color:#111;letter-spacing:-0.26px;">Show</div>
<div class=t style="left:1075.60px;top:465px;font-size:11px;color:#000;letter-spacing:0.28px;">25</div>
<div class=t style="left:1119.75px;top:467px;font-size:10px;color:#111;letter-spacing:0.91px;">per page.</div>
<div class=t style="left:38.80px;top:496px;font-size:10.5px;color:#fff;font-weight:bold;-webkit-text-stroke:0;letter-spacing:0.30px;transform:scaleX(0.993);transform-origin:0 0;">Display Name</div>
<div class=t style="left:266.00px;top:496px;font-size:10.5px;color:#3a3a3a;font-weight:bold;-webkit-text-stroke:0;letter-spacing:0.30px;transform:scaleX(0.977);transform-origin:0 0;">SAM Account Name</div>
<div class=t style="left:493.50px;top:496px;font-size:10.5px;color:#3a3a3a;font-weight:bold;-webkit-text-stroke:0;letter-spacing:0.30px;">Member Of</div>
<div class=t style="left:721.00px;top:496px;font-size:10.5px;color:#3a3a3a;font-weight:bold;-webkit-text-stroke:0;letter-spacing:0.30px;transform:scaleX(0.991);transform-origin:0 0;">Primary Group</div>
<div class=t style="left:949.00px;top:496px;font-size:10.5px;color:#3a3a3a;font-weight:bold;-webkit-text-stroke:0;letter-spacing:0.30px;transform:scaleX(1.025);transform-origin:0 0;">Manager</div>
<div class=t style="left:40.80px;top:523px;font-size:12px;color:#111;transform:scaleX(0.940);transform-origin:0 0;">aardal</div>
<div class=t style="left:269.00px;top:523px;font-size:12px;color:#111;transform:scaleX(0.940);transform-origin:0 0;">aardal</div>
<div class=t style="left:493.50px;top:523px;font-size:10.5px;color:#111;letter-spacing:0.79px;">Domain Users.</div>
<div class=t style="left:721.00px;top:523px;font-size:10.5px;color:#111;letter-spacing:0.70px;">Domain Users</div>
<div class=t style="left:40.80px;top:550px;font-size:12px;color:#111;transform:scaleX(0.940);transform-origin:0 0;">antalya</div>
<div class=t style="left:269.00px;top:550px;font-size:12px;color:#111;transform:scaleX(0.940);transform-origin:0 0;">antalya</div>
<div class=t style="left:493.50px;top:550px;font-size:10.5px;color:#111;letter-spacing:0.79px;">Domain Users.</div>
<div class=t style="left:721.00px;top:550px;font-size:10.5px;color:#111;letter-spacing:0.70px;">Domain Users</div>
<div class=t style="left:40.80px;top:577px;font-size:12px;color:#111;transform:scaleX(0.940);transform-origin:0 0;">James</div>
<div class=t style="left:269.00px;top:577px;font-size:12px;color:#111;transform:scaleX(0.940);transform-origin:0 0;">James</div>
<div class=t style="left:493.50px;top:577px;font-size:10.5px;color:#111;letter-spacing:0.79px;">Domain Users.</div>
<div class=t style="left:721.00px;top:577px;font-size:10.5px;color:#111;letter-spacing:0.70px;">Domain Users</div>
<div class=t style="left:41.50px;top:603px;font-size:12px;color:#111;transform:scaleX(0.940);transform-origin:0 0;">Elchanan</div>
<div class=t style="left:269.70px;top:603px;font-size:12px;color:#111;transform:scaleX(0.940);transform-origin:0 0;">Elchanan</div>
<div class=t style="left:493.50px;top:604px;font-size:10.5px;color:#111;letter-spacing:0.79px;">Domain Users.</div>
<div class=t style="left:721.00px;top:604px;font-size:10.5px;color:#111;letter-spacing:0.70px;">Domain Users</div>
<div class=t style="left:41.50px;top:631px;font-size:12px;color:#111;transform:scaleX(0.940);transform-origin:0 0;">Pascal</div>
<div class=t style="left:269.70px;top:631px;font-size:12px;color:#111;transform:scaleX(0.940);transform-origin:0 0;">Pascal</div>
<div class=t style="left:493.50px;top:631px;font-size:10.5px;color:#111;letter-spacing:0.79px;">Domain Users.</div>
<div class=t style="left:721.00px;top:631px;font-size:10.5px;color:#111;letter-spacing:0.70px;">Domain Users</div>
<div class=t style="left:42.00px;top:657px;font-size:12px;color:#111;transform:scaleX(0.940);transform-origin:0 0;">Villiers</div>
<div class=t style="left:270.20px;top:657px;font-size:12px;color:#111;transform:scaleX(0.940);transform-origin:0 0;">Villiers</div>
<div class=t style="left:493.50px;top:658px;font-size:10.5px;color:#111;letter-spacing:0.79px;">Domain Users.</div>
<div class=t style="left:721.00px;top:658px;font-size:10.5px;color:#111;letter-spacing:0.70px;">Domain Users</div>
<div class=t style="left:41.50px;top:685px;font-size:12px;color:#111;transform:scaleX(0.940);transform-origin:0 0;">Yarrow</div>
<div class=t style="left:269.70px;top:685px;font-size:12px;color:#111;transform:scaleX(0.940);transform-origin:0 0;">Yarrow</div>
<div class=t style="left:493.50px;top:685px;font-size:10.5px;color:#111;letter-spacing:0.79px;">Domain Users.</div>
<div class=t style="left:721.00px;top:685px;font-size:10.5px;color:#111;letter-spacing:0.70px;">Domain Users</div>
<div class=t style="left:42.50px;top:711px;font-size:12px;color:#111;transform:scaleX(0.940);transform-origin:0 0;">Everard</div>
<div class=t style="left:270.70px;top:711px;font-size:12px;color:#111;transform:scaleX(0.940);transform-origin:0 0;">Everard</div>
<div class=t style="left:493.50px;top:712px;font-size:10.5px;color:#111;letter-spacing:0.79px;">Domain Users.</div>
<div class=t style="left:721.00px;top:712px;font-size:10.5px;color:#111;letter-spacing:0.70px;">Domain Users</div>
<div class=t style="left:41.50px;top:739px;font-size:12px;color:#111;transform:scaleX(0.940);transform-origin:0 0;">Madison</div>
<div class=t style="left:269.70px;top:739px;font-size:12px;color:#111;transform:scaleX(0.940);transform-origin:0 0;">Madison</div>
<div class=t style="left:493.50px;top:739px;font-size:10.5px;color:#111;letter-spacing:0.79px;">Domain Users.</div>
<div class=t style="left:721.00px;top:739px;font-size:10.5px;color:#111;letter-spacing:0.70px;">Domain Users</div>
<div class=t style="left:40.50px;top:765px;font-size:12px;color:#111;transform:scaleX(0.940);transform-origin:0 0;">Yovanny</div>
<div class=t style="left:268.70px;top:765px;font-size:12px;color:#111;transform:scaleX(0.940);transform-origin:0 0;">Yovanny</div>
<div class=t style="left:493.50px;top:766px;font-size:10.5px;color:#111;letter-spacing:0.79px;">Domain Users.</div>
<div class=t style="left:721.00px;top:766px;font-size:10.5px;color:#111;letter-spacing:0.70px;">Domain Users</div>
<div class=a style="left:1186px;top:39px;width:14px;height:738px;background:#eeeded"></div>
<svg class=a style="left:1186px;top:41px" width="14" height="10"><path d="M3 7 H11 L7 3 Z" fill="#000"/></svg>
<div class=a style="left:1187px;top:55px;width:13px;height:405px;background:linear-gradient(90deg,#f4f4f4,#ffffff 30%,#e0e0e0 80%,#c8c8c8);border:1px solid #b8b8b8;border-right:none"></div>
<svg class=a style="left:1187px;top:251px" width="12" height="10"><path d="M3 2 H10 M3 4.5 H10 M3 7 H10" stroke="#777" stroke-width="1"/></svg>
<svg class=a style="left:1186px;top:766px" width="14" height="10"><path d="M3 3 H11 L7 7 Z" fill="#000"/></svg>
<div class=a style="left:0;top:777px;width:1200px;height:23px;background:linear-gradient(#f2f2f2,#ececec);border-top:1px solid #c8c8c8"></div>
<div class=a style="left:941px;top:780px;width:1px;height:18px;background:#d6d6d2"></div><div class=a style="left:942px;top:780px;width:1px;height:18px;background:#fff"></div>
<div class=a style="left:964px;top:780px;width:1px;height:18px;background:#d6d6d2"></div><div class=a style="left:965px;top:780px;width:1px;height:18px;background:#fff"></div>
<div class=a style="left:987px;top:780px;width:1px;height:18px;background:#d6d6d2"></div><div class=a style="left:988px;top:780px;width:1px;height:18px;background:#fff"></div>
<div class=a style="left:1010px;top:780px;width:1px;height:18px;background:#d6d6d2"></div><div class=a style="left:1011px;top:780px;width:1px;height:18px;background:#fff"></div>
<div class=a style="left:1032px;top:780px;width:1px;height:18px;background:#d6d6d2"></div><div class=a style="left:1033px;top:780px;width:1px;height:18px;background:#fff"></div>
<div class=a style="left:1055px;top:780px;width:1px;height:18px;background:#d6d6d2"></div><div class=a style="left:1056px;top:780px;width:1px;height:18px;background:#fff"></div>
<svg class=a style="left:1px;top:780px" width="17" height="18"><path d="M5 1.5 H13 L16 4.5 V16.5 H5 Z" fill="#e4ecfa" stroke="#7078b8" stroke-width="1"/><path d="M5.5 2 H12" stroke="#fff" stroke-width="1.5"/><path d="M10.5 11 H4 A3.6 3.6 0 1 1 10.3 8.6 M4.3 12.5 A3.6 3.6 0 0 0 10 13.5" stroke="#1a7ee0" stroke-width="2.4" fill="none"/><path d="M2 14 Q6 3 14 5" stroke="#58b0f0" stroke-width="1" fill="none"/></svg>
<svg class=a style="left:1059px;top:780px" width="17" height="17"><rect x="6" y="2" width="10" height="9" rx="1" fill="#8ac8f0" stroke="#5a7ab8" stroke-width="1"/><path d="M8 12 H14 L15 15 H7 Z" fill="#c8c8e8" stroke="#7a7ab8" stroke-width="0.6"/><circle cx="5" cy="6" r="4.5" fill="#3a9a40"/><path d="M2 4 Q5 2 8 5" stroke="#3a8ae0" stroke-width="2" fill="none"/></svg>
<div class=t style="left:20.00px;top:785px;font-size:10.5px;color:#000;letter-spacing:-0.75px;">Done</div>
<div class=t style="left:1077.50px;top:785px;font-size:10.5px;color:#000;letter-spacing:-0.20px;">Local intranet</div>
</body></html>
